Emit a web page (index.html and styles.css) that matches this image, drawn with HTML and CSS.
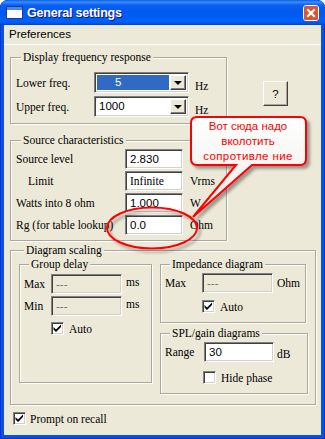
FILE: index.html
```html
<!DOCTYPE html>
<html lang="en">
<head>
    <meta charset="UTF-8">
    <meta name="viewport" content="width=device-width, initial-scale=1.0">
    <title>General settings</title>
    <link rel="stylesheet" href="styles.css">
</head>
<body>
<div class="window">

    <!-- Title bar -->
    <div class="titlebar">
        <span class="app-icon"></span>
        <span class="title">General settings</span>
        <div class="close">
            <svg width="14" height="14" viewBox="0 0 14 14">
                <rect x="0" y="0" width="14" height="14" rx="2" fill="#dc5532"/>
                <path d="M4 4 L10 10 M10 4 L4 10" stroke="#fff" stroke-width="2.2" stroke-linecap="square"/>
            </svg>
        </div>
    </div>

    <div class="client">
        <div class="menubar"><span>Preferences</span></div>

        <div class="content">
            <div class="row-top">
                <!-- Display frequency response -->
                <fieldset class="group g-display">
                    <legend>Display frequency response</legend>
                    <div class="line">
                        <label class="lbl lbl-display">Lower freq.</label>
                        <div class="combo">
                            <span class="combo-text selected">5</span>
                            <span class="combo-btn"></span>
                        </div>
                        <span class="unit unit-hz">Hz</span>
                    </div>
                    <div class="line">
                        <label class="lbl lbl-display">Upper freq.</label>
                        <div class="combo">
                            <span class="combo-text">1000</span>
                            <span class="combo-btn"></span>
                        </div>
                        <span class="unit unit-hz">Hz</span>
                    </div>
                </fieldset>
                <button class="btn-help">?</button>
            </div>

            <!-- Source characteristics -->
            <fieldset class="group g-source">
                <legend>Source characteristics</legend>
                <div class="line">
                    <label class="lbl lbl-source">Source level</label>
                    <span class="field f-source">2.830</span>
                    <span class="unit unit-source">Vrms</span>
                </div>
                <div class="line">
                    <label class="lbl lbl-source indent">Limit</label>
                    <span class="field f-source serif">Infinite</span>
                    <span class="unit unit-source">Vrms</span>
                </div>
                <div class="line">
                    <label class="lbl lbl-source">Watts into 8 ohm</label>
                    <span class="field f-source">1.000</span>
                    <span class="unit unit-source">W</span>
                </div>
                <div class="line">
                    <label class="lbl lbl-source">Rg (for table lookup)</label>
                    <span class="field f-source">0.0</span>
                    <span class="unit unit-source">Ohm</span>
                </div>
            </fieldset>

            <!-- Diagram scaling -->
            <fieldset class="group g-diagram">
                <legend>Diagram scaling</legend>
                <div class="diagram-cols">
                    <fieldset class="group g-delay">
                        <legend>Group delay</legend>
                        <div class="line">
                            <label class="lbl lbl-delay">Max</label>
                            <span class="field f-delay disabled">---</span>
                            <span class="unit unit-ms">ms</span>
                        </div>
                        <div class="line">
                            <label class="lbl lbl-delay">Min</label>
                            <span class="field f-delay disabled">---</span>
                            <span class="unit unit-ms">ms</span>
                        </div>
                        <div class="check-line delay-auto">
                            <span class="checkbox checked"></span>
                            <span>Auto</span>
                        </div>
                    </fieldset>

                    <div class="right-col">
                        <fieldset class="group g-imp">
                            <legend>Impedance diagram</legend>
                            <div class="line">
                                <label class="lbl lbl-imp">Max</label>
                                <span class="field f-imp disabled">---</span>
                                <span class="unit unit-ohm">Ohm</span>
                            </div>
                            <div class="check-line imp-auto">
                                <span class="checkbox checked"></span>
                                <span>Auto</span>
                            </div>
                        </fieldset>

                        <fieldset class="group g-spl">
                            <legend>SPL/gain diagrams</legend>
                            <div class="line">
                                <label class="lbl lbl-spl">Range</label>
                                <span class="field f-spl">30</span>
                                <span class="unit unit-db">dB</span>
                            </div>
                            <div class="check-line spl-hide">
                                <span class="checkbox"></span>
                                <span>Hide phase</span>
                            </div>
                        </fieldset>
                    </div>
                </div>
            </fieldset>

            <div class="check-line prompt">
                <span class="checkbox checked"></span>
                <span>Prompt on recall</span>
            </div>
        </div>
    </div>

    <!-- Annotation drawn over the dialog -->
    <svg class="annotation" width="325" height="439" viewBox="0 0 325 439">
        <defs>
            <filter id="shade" x="-20%" y="-20%" width="140%" height="140%">
                <feDropShadow dx="3" dy="3" stdDeviation="1.5" flood-color="#000" flood-opacity="0.35"/>
            </filter>
            <linearGradient id="bubble" x1="0" y1="0" x2="0" y2="1">
                <stop offset="0" stop-color="#ffffff"/>
                <stop offset="1" stop-color="#ecebe6"/>
            </linearGradient>
        </defs>
        <ellipse cx="152" cy="228" rx="45" ry="20.5" fill="none" stroke="#f00" stroke-width="2" filter="url(#shade)"/>
        <path d="M197 117 H300 Q306 117 306 123 V159 Q306 165 300 165 H252 L193 217 L236 165 H197 Q191 165 191 159 V123 Q191 117 197 117 Z"
              fill="url(#bubble)" stroke="#f00" stroke-width="2" filter="url(#shade)"/>
        <text class="note" x="248" y="130">Вот сюда надо</text>
        <text class="note" x="248" y="145">вколотить</text>
        <text class="note spaced" x="248" y="160">сопротивле ние</text>
    </svg>
</div>
</body>
</html>
```

FILE: styles.css
```css
body {
    margin: 0;
    background: #fff;
    font-family: "Liberation Serif", serif;
    font-size: 11.5px;
    color: #000;
}

.window {
    position: relative;
    width: 325px;
    height: 439px;
    background: #0553e1;
    border-radius: 8px 8px 0 0;
    box-shadow: inset 0 0 0 1px #0831d9;
    display: flex;
    flex-direction: column;
    overflow: hidden;
}

.titlebar {
    height: 25px;
    display: flex;
    align-items: center;
    padding: 0 6px 0 7px;
    background: linear-gradient(to bottom, #0a5de8 0%, #3d8dff 8%, #0a60f2 20%, #0058ee 50%, #0062fb 85%, #0052e6 95%, #003dd7 100%);
    border-radius: 8px 8px 0 0;
}

.app-icon {
    width: 15px;
    height: 8px;
    background: #fff;
    border-top: 3px solid #4f86e6;
    box-shadow: 0 0 0 1px #1b3e9c;
}

.title {
    margin-left: 5px;
    color: #fff;
    font-family: "Liberation Sans", sans-serif;
    font-weight: bold;
    font-size: 12.5px;
    letter-spacing: -0.2px;
    text-shadow: 1px 1px 0 #0f1089;
}

.close {
    margin-left: auto;
    width: 14px;
    height: 14px;
    border: 1px solid #fff;
    border-radius: 3px;
    display: flex;
}

.client {
    flex: 1;
    margin: 0 4px 4px 4px;
    background: #ece9d8;
    display: flex;
    flex-direction: column;
}

.menubar {
    height: 19px;
    line-height: 19px;
    padding-left: 5px;
    border-bottom: 1px solid #fff;
    font-family: "Liberation Sans", sans-serif;
    font-size: 11.5px;
}

.content {
    padding-left: 6px;
}

/* group boxes */
.group {
    margin: 0;
    box-sizing: border-box;
    border: 1px solid #aca899;
    box-shadow: inset 1px 1px 0 #fff, 1px 1px 0 #fff;
    min-width: 0;
}

.group legend {
    padding: 0 2px;
    margin-left: 5px;
    line-height: 14px;
    background: #ece9d8;
}

.line {
    display: flex;
    align-items: center;
}

.lbl {
    flex: none;
}

.unit {
    flex: none;
}

/* sunken edit field */
.field {
    box-sizing: border-box;
    height: 20px;
    line-height: 16px;
    padding: 1px 4px 0 4px;
    background: #fff;
    border-top: 1px solid #808080;
    border-left: 1px solid #808080;
    border-bottom: 1px solid #fff;
    border-right: 1px solid #fff;
    box-shadow: inset 1px 1px 0 #404040, inset -1px -1px 0 #d4d0c8;
    font-family: "Liberation Sans", sans-serif;
    font-size: 11.5px;
}

.field.serif {
    font-family: "Liberation Serif", serif;
}

.field.disabled {
    background: #ece9d8;
    color: #6d6d6d;
}

/* display frequency response */
.row-top {
    display: flex;
    align-items: flex-start;
    margin-top: 5px;
}

.g-display {
    width: 217px;
    padding: 8px 0 6px 5px;
    display: flex;
    flex-direction: column;
    gap: 3px;
}

.lbl-display {
    width: 78px;
}

.combo {
    box-sizing: border-box;
    width: 95px;
    height: 21px;
    display: flex;
    align-items: center;
    padding: 2px;
    background: #fff;
    border-top: 1px solid #808080;
    border-left: 1px solid #808080;
    border-bottom: 1px solid #fff;
    border-right: 1px solid #fff;
    box-shadow: inset 1px 1px 0 #404040, inset -1px -1px 0 #d4d0c8;
}

.combo-text {
    flex: 1;
    height: 100%;
    line-height: 15px;
    padding-left: 2px;
    font-family: "Liberation Sans", sans-serif;
    font-size: 11.5px;
}

.combo-text.selected {
    background: #316ac5;
    color: #fff;
    padding-left: 18px;
    margin-right: 1px;
}

.combo-btn {
    box-sizing: border-box;
    width: 16px;
    height: 15px;
    background: #ece9d8;
    border-top: 1px solid #fff;
    border-left: 1px solid #fff;
    border-right: 1px solid #404040;
    border-bottom: 1px solid #404040;
    box-shadow: inset -1px -1px 0 #808080;
    display: flex;
    align-items: center;
    justify-content: center;
}

.combo-btn::after {
    content: "";
    border-left: 4px solid transparent;
    border-right: 4px solid transparent;
    border-top: 4px solid #000;
    margin-top: 1px;
}

.unit-hz {
    margin-left: 6px;
    margin-top: 6px;
}

.btn-help {
    margin: 31px 0 0 36px;
    width: 25px;
    height: 25px;
    padding: 0;
    background: #ece9d8;
    border-top: 1px solid #fff;
    border-left: 1px solid #fff;
    border-right: 1px solid #404040;
    border-bottom: 1px solid #404040;
    box-shadow: inset -1px -1px 0 #aca899;
    font-family: "Liberation Sans", sans-serif;
    font-size: 11.5px;
    color: #000;
}

/* source characteristics */
.g-source {
    width: 217px;
    margin-top: 9px;
    padding: 2px 0 5px 5px;
    display: flex;
    flex-direction: column;
    gap: 2px;
}

.lbl-source {
    width: 109px;
}

.lbl-source.indent {
    width: 97px;
    padding-left: 12px;
}

.f-source {
    width: 58px;
}

.unit-source {
    margin-left: 7px;
}

/* diagram scaling */
.g-diagram {
    width: 306px;
    margin-top: 2px;
    padding: 0 0 10px 8px;
}

.diagram-cols {
    display: flex;
    align-items: flex-start;
    gap: 8px;
}

.g-delay {
    width: 133px;
    height: 126px;
    padding: 3px 0 0 4px;
    display: flex;
    flex-direction: column;
    gap: 2px;
}

.lbl-delay {
    width: 27px;
}

.f-delay {
    width: 71px;
}

.unit-ms {
    margin-left: 4px;
    margin-top: -4px;
}

.delay-auto {
    margin: 4px 0 0 27px;
}

.right-col {
    display: flex;
    flex-direction: column;
    gap: 3px;
}

.g-imp {
    width: 146px;
    height: 66px;
    padding: 2px 0 0 4px;
}

.lbl-imp {
    width: 37px;
}

.f-imp {
    width: 71px;
}

.unit-ohm {
    margin-left: 4px;
}

.imp-auto {
    margin: 7px 0 0 37px;
}

.g-spl {
    width: 148px;
    height: 68px;
    padding: 2px 0 0 4px;
}

.lbl-spl {
    width: 39px;
}

.f-spl {
    width: 70px;
}

.unit-db {
    margin-left: 3px;
    margin-top: 3px;
}

.spl-hide {
    margin: 9px 0 0 38px;
}

/* checkboxes */
.check-line {
    display: flex;
    align-items: center;
    gap: 5px;
}

.checkbox {
    box-sizing: border-box;
    width: 13px;
    height: 13px;
    background: #fff;
    border-top: 1px solid #808080;
    border-left: 1px solid #808080;
    border-bottom: 1px solid #fff;
    border-right: 1px solid #fff;
    box-shadow: inset 1px 1px 0 #404040, inset -1px -1px 0 #d4d0c8;
    flex: none;
}

.checkbox.checked {
    background: #fff url("data:image/svg+xml;utf8,<svg xmlns='http://www.w3.org/2000/svg' width='11' height='11'><path d='M1.5 4 L4 6.5 L9 1.5 L9 4 L4 9 L1.5 6.5 Z' fill='black'/></svg>") no-repeat 0 0;
}

.prompt {
    margin: 7px 0 0 3px;
    gap: 4px;
}

/* annotation */
.annotation {
    position: absolute;
    left: 0;
    top: 0;
    pointer-events: none;
}

.note {
    font-family: "Liberation Sans", sans-serif;
    font-size: 11.5px;
    fill: #f00;
    text-anchor: middle;
}

.note.spaced {
    letter-spacing: 0.4px;
}
```
